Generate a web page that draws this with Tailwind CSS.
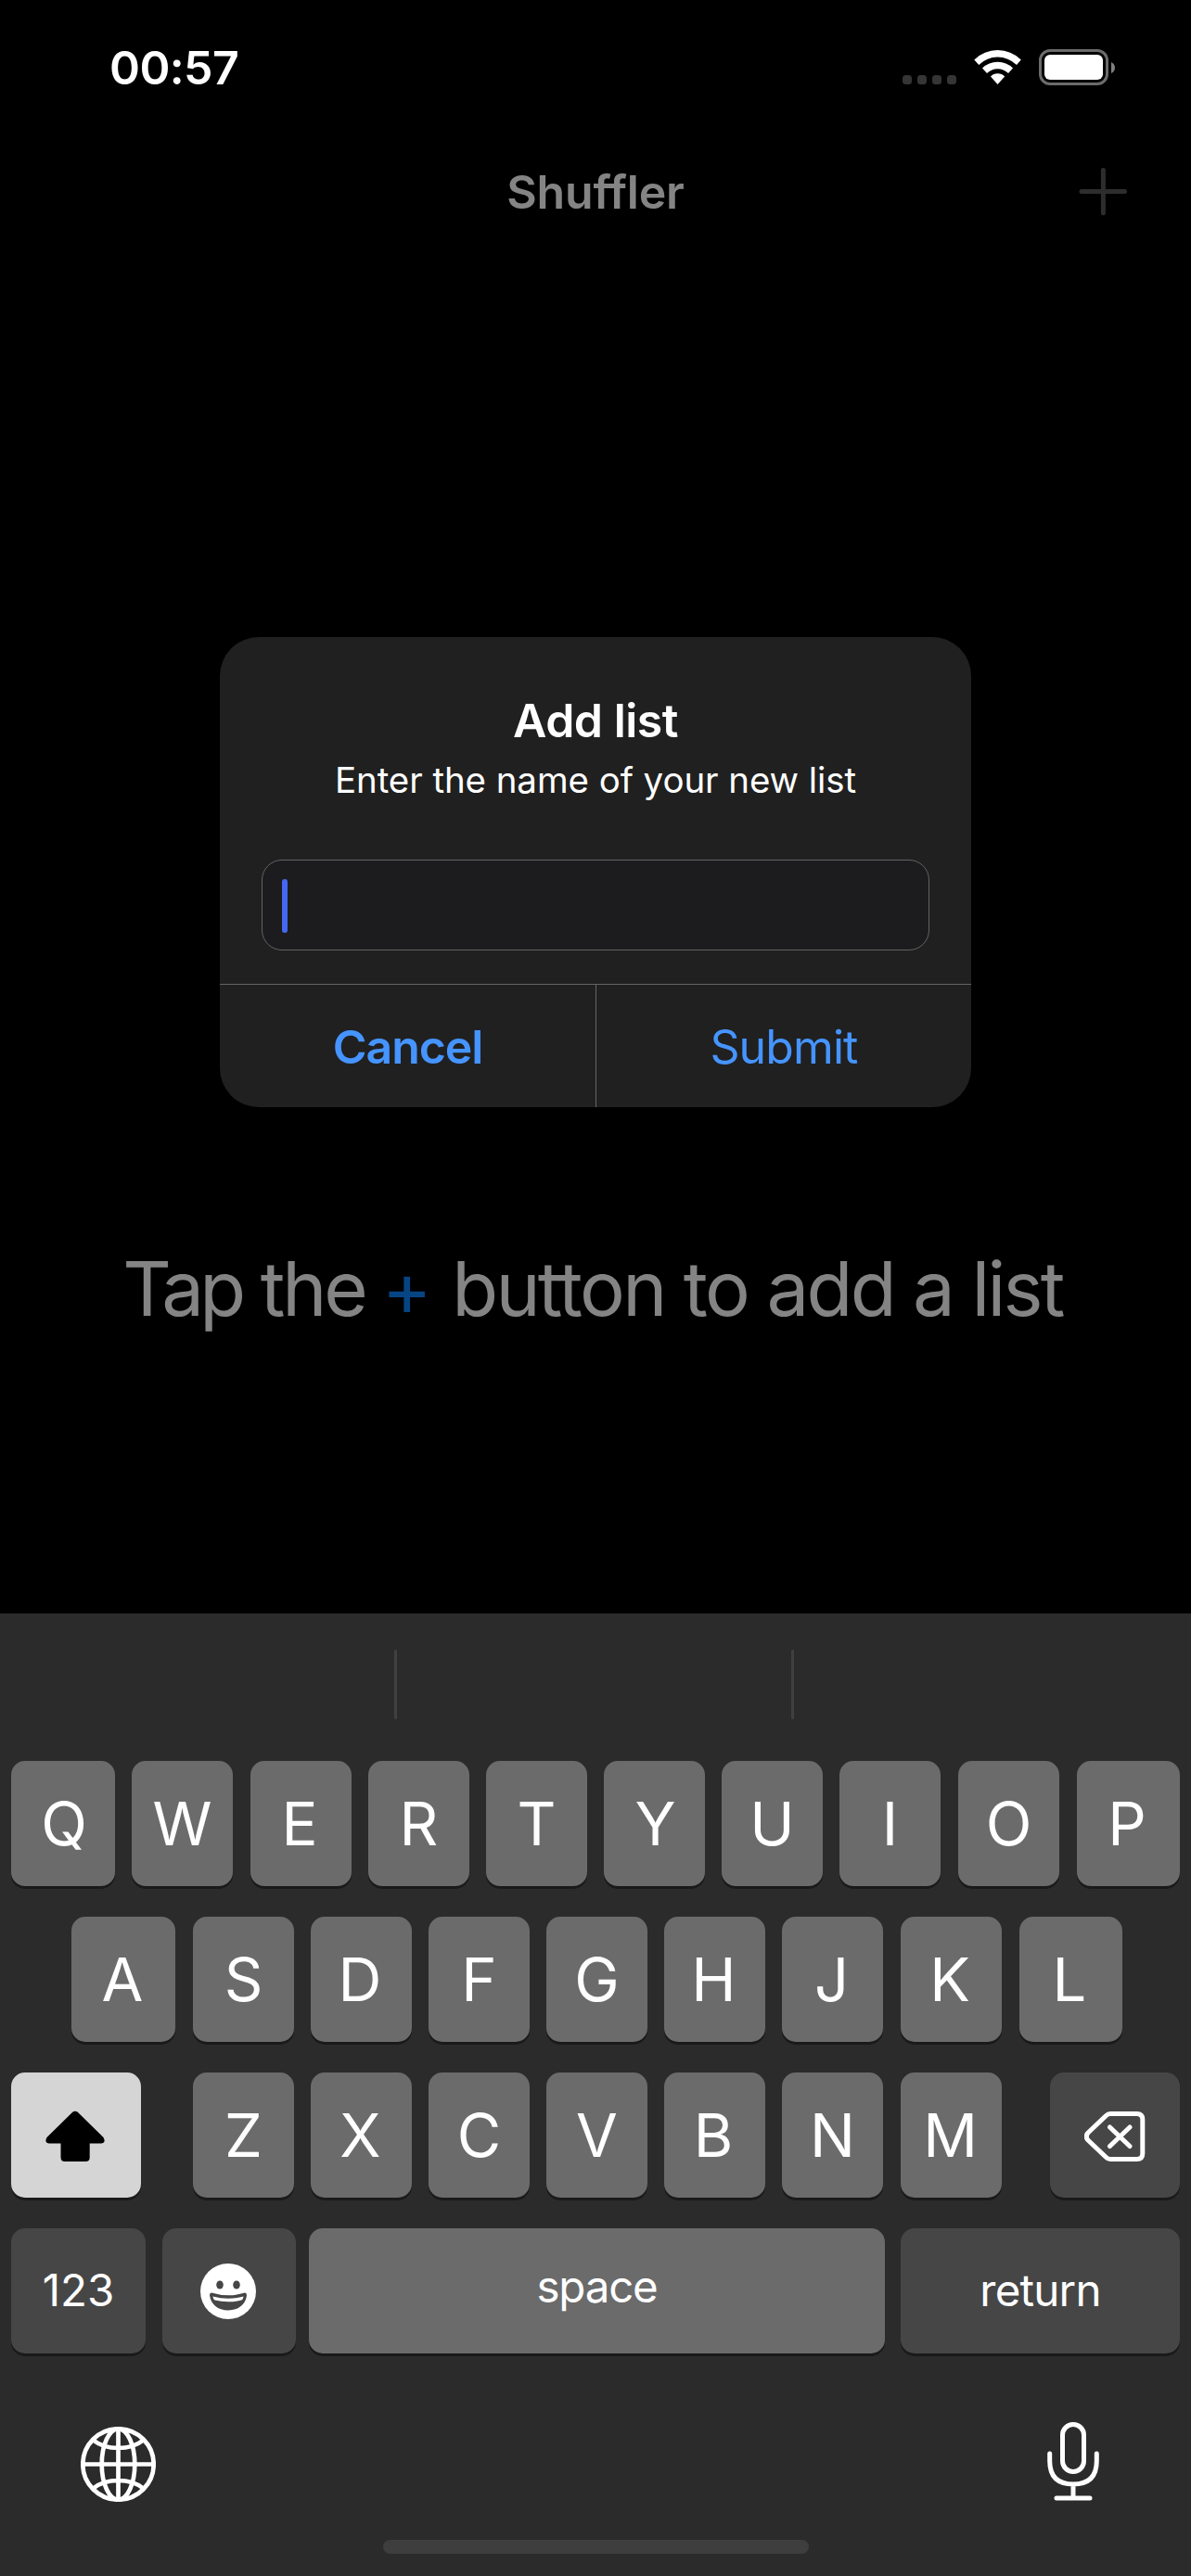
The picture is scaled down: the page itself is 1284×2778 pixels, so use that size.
<!DOCTYPE html>
<html lang="en">
<head>
<meta charset="utf-8">
<title>Shuffler</title>
<script src="https://cdn.jsdelivr.net/npm/@tailwindcss/browser@4"></script>
</head>
<body class="bg-black">
<div class="relative flex h-[2778px] w-[1284px] flex-col overflow-hidden bg-black font-['Inter','Liberation_Sans',sans-serif] text-white">
  <!-- Status bar -->
  <header class="flex h-[146px] shrink-0 items-center justify-between pl-[118px] pr-[82px]">
    <span class="text-[50px] leading-none font-semibold tracking-[-0.6px]">00:57</span>
    <svg class="h-[40px] w-[230px]" viewBox="972 53 230 40" fill="none">
      <g fill="#353535"><rect x="973" y="81" width="10" height="10" rx="3.5"/><rect x="989" y="81" width="10" height="10" rx="3.5"/><rect x="1005" y="81" width="10" height="10" rx="3.5"/><rect x="1021" y="81" width="10" height="10" rx="3.5"/></g>
      <g fill="#fff"><path d="M1050.3 64.5Q1061 54 1075.500 54Q1090 54 1100.800 64.500L1096 70Q1087 61.500 1075.500 61.500Q1064 61.500 1055.300 70Z"/><path d="M1059 73.500Q1066 66.800 1075.500 66.800Q1085 66.800 1092 73.500L1087 79Q1082 74.300 1075.500 74.300Q1069 74.300 1064 79Z"/><path d="M1068 82.500Q1071 79.300 1075.500 79.300Q1080 79.300 1083.200 82.500L1075.500 91Z"/></g>
      <rect x="1121.500" y="54.500" width="72" height="36" rx="10.500" stroke="#6b6b6b" stroke-width="3"/>
      <rect x="1126" y="59" width="63" height="27" rx="6" fill="#fff"/>
      <path d="M1198 67Q1202 69 1202 73Q1202 77 1198 79Z" fill="#808080"/>
    </svg>
  </header>

  <!-- Navigation bar -->
  <nav class="grid h-[122px] shrink-0 grid-cols-3 items-center px-[68px]">
    <span></span>
    <h1 class="text-center text-[50px] leading-none font-semibold tracking-[-0.2px] text-[#848484]">Shuffler</h1>
    <svg class="h-[54px] w-[54px] justify-self-end" viewBox="0 0 54 54" stroke="#2d2d2d" stroke-width="5" stroke-linecap="round"><path d="M27.400 3.500V49.800M4 26.600H50.500"/></svg>
  </nav>

  <main class="flex h-[1472px] shrink-0 flex-col items-center pt-[419px]">
    <!-- Dialog -->
    <section class="flex h-[507px] w-[810px] flex-col overflow-hidden rounded-[42px] bg-[#202020] text-center">
      <h2 class="mt-[65px] h-[50px] text-[50px] leading-[50px] font-semibold tracking-[-0.500px]">Add list</h2>
      <p class="mt-[14px] h-[50px] text-[38.500px] leading-[50px] tracking-[-0.080px]">Enter the name of your new list</p>
      <div class="mx-[45px] mt-[61px] flex h-[98px] items-center rounded-[22px] border border-[#626263] bg-[#1c1c1e] pl-[21px]">
        <span class="mt-[2px] h-[58px] w-[6px] rounded-[3px] bg-[#4468f2]"></span>
      </div>
      <div class="mt-[36px] flex grow border-t border-[#656565] text-[50px] leading-none text-[#4594ff]">
        <button class="w-[406px] border-r border-[#656565] pt-px font-semibold tracking-[-1.100px]">Cancel</button>
        <button class="grow pt-px tracking-[-0.900px]">Submit</button>
      </div>
    </section>
    <p class="mt-[146px] mr-[6px] text-[81.500px] leading-[100px] tracking-[-2.700px] whitespace-nowrap text-[#848484]"><span class="tracking-[-4.700px]">Tap</span> <span class="tracking-[-3.200px]">the</span> <span class="mr-[4px] ml-[-2px] text-[#064584]">+</span> button to add a list</p>
  </main>

  <!-- Keyboard -->
  <section class="flex h-[1038px] shrink-0 flex-col bg-[#2b2b2b]">
    <div class="flex h-[159px] shrink-0 pt-[39px] pl-[425px]">
      <span class="h-[75px] w-[3px] rounded-full bg-[#404040]"></span>
      <span class="ml-[425px] h-[75px] w-[3px] rounded-full bg-[#404040]"></span>
    </div>
    <div class="flex flex-col gap-[33px] text-[65px] *:flex *:h-[135px] *:gap-[18px] *:*:flex *:*:w-[109px] *:*:items-center *:*:justify-center *:*:rounded-[15px] *:*:bg-[#6b6b6b] *:*:leading-none *:*:shadow-[0_3px_0_#1a1a1a]">
      <div class="pl-[12px]"><button class="w-[112px]! pl-[2px]">Q</button><button>W</button><button class="ml-px pr-[3px]">E</button><button>R</button><button>T</button><button class="pl-[2px]">Y</button><button>U</button><button>I</button><button class="ml-px">O</button><button class="ml-px w-[111px]! pr-[3px]">P</button></div>
      <div class="pl-[77px]"><button class="w-[112px]! pr-[2px]">A</button><button class="ml-px">S</button><button class="pr-[3px]">D</button><button>F</button><button>G</button><button class="pr-[2px]">H</button><button class="pr-[2px]">J</button><button class="ml-px pr-[3px]">K</button><button class="ml-px w-[111px]! pr-[3px]">L</button></div>
      <div class="pl-[12px]">
        <button class="mr-[38px] w-[140px]! bg-[#d5d5d5]!" aria-label="Shift"><svg class="mb-[-2px] ml-[-3px] h-[56px] w-[64px]" viewBox="0 0 64 56" fill="#000"><path d="M29.500 1.500Q32 -.2 34.500 1.500L62.500 29Q65.500 34.500 60.500 35.500H47.700V50.500Q47.700 55 43.200 55H21Q16.500 55 16.500 50.500V35.500H3.500Q-1.500 34.500 1.500 29Z"/></svg></button>
        <button>Z</button><button class="pr-[2px]">X</button><button>C</button><button>V</button><button class="pr-[3px]">B</button><button>N</button><button class="ml-px pr-[2px]">M</button>
        <button class="ml-[34px] w-[140px]! bg-[#464646]!" aria-label="Delete"><svg class="mt-[3px] h-[54px] w-[66px]" viewBox="0 0 66 54" fill="none" stroke="#fff" stroke-width="5" stroke-linecap="round" stroke-linejoin="round"><path d="M28 2.500H56.500Q62.800 2.500 62.800 8.500V45.500Q62.800 51.500 56.500 51.500H28Q25.500 51.500 23.500 49.500L4 31Q.5 27 4 23L23.500 4.500Q25.500 2.500 28 2.500ZM27.500 17L49 37.500M49 17L27.500 37.500"/></svg></button>
      </div>
      <div class="pl-[12px] text-[47.500px]">
        <button class="w-[145px]! bg-[#464646]! pb-px">123</button>
        <button class="w-[144px]! bg-[#464646]!" aria-label="Emoji"><svg class="mr-[2px] h-[60px] w-[60px]" viewBox="0 0 60 60"><circle cx="30" cy="30" r="30" fill="#fff"/><g fill="#464646"><ellipse cx="21" cy="23" rx="3.800" ry="4.500"/><ellipse cx="39" cy="23" rx="3.800" ry="4.500"/><path d="M12 31.500Q30 37 48 31.500Q50 31.500 50 34C49 44 41 50.500 30 50.500C19 50.500 11 44 10 34Q10 31.500 12 31.500Z"/></g><path d="M13.500 35.500Q30 40 46.500 35.500Q46.500 38 44.500 39.500Q30 43 15.500 39.500Q13.500 38 13.500 35.500Z" fill="#fff"/></svg></button>
        <button class="ml-[-4px] w-[621px]! pb-[10px] tracking-[-1.200px]">space</button>
        <button class="ml-[-1px] w-[301px]! bg-[#464646]! pb-[2px] tracking-[-0.800px]">return</button>
      </div>
    </div>
    <div class="flex h-[201px] shrink-0 items-start justify-between pr-[98px] pl-[87px]">
      <svg class="mt-[79px] h-[81px] w-[81px]" viewBox="0 0 81 81" fill="none" stroke="#fff" stroke-width="4.700"><circle cx="40.500" cy="40.500" r="38.200"/><ellipse cx="40.500" cy="40.500" rx="17.800" ry="38.200"/><path d="M40.500 2V79M2 40.500H79M13.500 14.500Q24 23 40.500 23T67.500 14.500M13.500 66.500Q24 58 40.500 58T67.500 66.500"/></svg>
      <svg class="mt-[74px] h-[86px] w-[58px]" viewBox="0 0 58 86" fill="none" stroke="#fff" stroke-width="5" stroke-linecap="round"><rect x="17.500" y="2.500" width="23" height="51" rx="11.500"/><path d="M3.700 34V42Q3.700 67 29 67T54.300 42V34M29 67V82M11 82H47"/></svg>
    </div>
    <div class="ml-[413px] h-[15px] w-[459px] shrink-0 rounded-full bg-[#3e3e3e]"></div>
  </section>
</div>
</body>
</html>
